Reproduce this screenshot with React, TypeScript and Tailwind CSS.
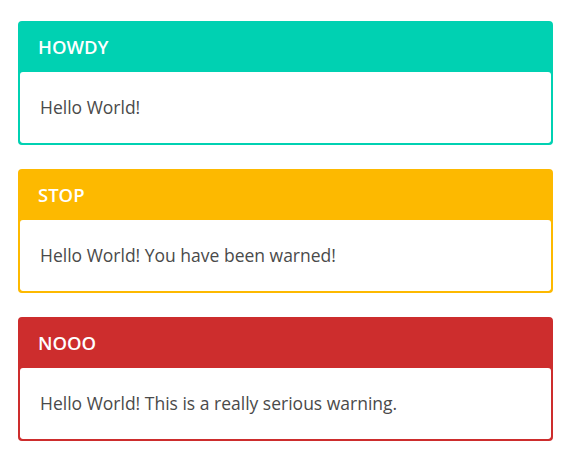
export default function App() {
  const cards = [
    { title: "HOWDY", body: "Hello World!", head: "bg-[#00d1b2]", border: "border-[#00d1b2]" },
    { title: "STOP", body: "Hello World! You have been warned!", head: "bg-[#fdb900]", border: "border-[#fdb900]" },
    { title: "NOOO", body: "Hello World! This is a really serious warning.", head: "bg-[#cd2d2d]", border: "border-[#cd2d2d]" },
  ];
  return (
    <div className="min-h-[465px] bg-white pt-[21px] pl-[18px] pr-[20px] flex flex-col gap-[24px]" style={{ fontFamily: '"Open Sans", "Noto Sans", sans-serif' }}>
      {cards.map((c) => (
        <div key={c.title} className={`w-[535px] rounded-[4px] border-2 ${c.border} ${c.head} overflow-hidden`}>
          <div className="h-[49px] flex items-center pl-[18px] pb-[2px] text-white text-[18.5px] font-semibold">{c.title}</div>
          <div className="h-[71px] flex items-center pl-[20px] bg-white rounded-[3px] text-[#4a4a4a] text-[17.5px]">{c.body}</div>
        </div>
      ))}
    </div>
  );
}
